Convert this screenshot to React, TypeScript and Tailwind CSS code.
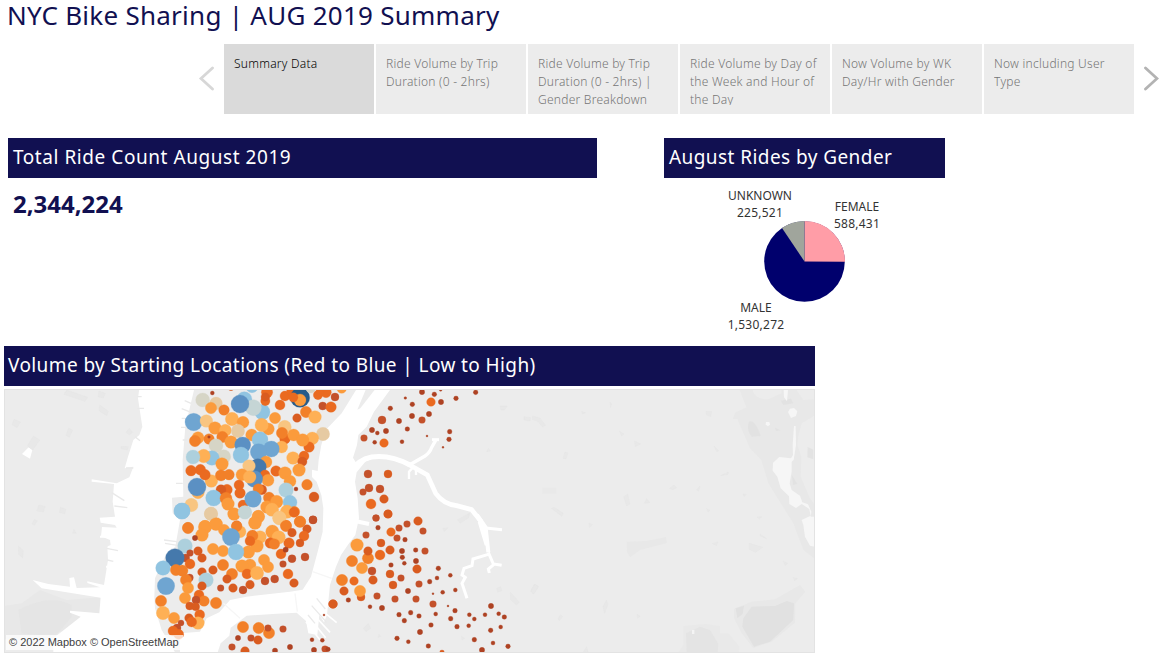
import React from "react";

const COLORS: Record<string, string> = {
  a: "#ae4223",
  b: "#c4512a",
  c: "#d95c20",
  d: "#ea6a20",
  e: "#f28029",
  f: "#fb9b3c",
  g: "#feb055",
  h: "#f8c581",
  t: "#e6caa2",
  s: "#d6d5c6",
  w: "#c5d5d5",
  x: "#add0dd",
  l: "#90c4e1",
  m: "#6fa5d1",
  n: "#5b90c3",
  k: "#4579ac",
  z: "#255a88",
};

type Tile = { x: number; y: number; dots: string };

// Station markers per map tile, in thirds of a pixel: "x y radius colour".
const TILES: Tile[] = [
  {
    x: 150,
    y: 385,
    dots: `306 4 19 l;243 8 9 c;158 45 21 s;187 24 6 a;198 55 19 t;183 69 17 f;222 75 16 e;283 43 23 l;337 81 23 l;310 68 24 w;270 57 27 n;351 22 17 d;346 48 14 d;346 36 13 c;375 99 17 f;390 60 15 d;405 33 15 d;426 18 16 d;450 38 29 z;450 45 18 f;430 37 14 d;482 10 14 s;504 30 14 d;528 22 16 d;510 22 12 d;576 8 14 d;555 36 12 b;518 63 12 b;543 66 16 d;441 99 13 c;468 81 17 e;495 96 19 g;
131 111 26 m;169 108 19 h;246 102 20 g;279 112 18 f;195 129 19 f;226 136 18 g;264 138 20 t;355 132 18 f;335 120 20 g;305 150 18 f;404 126 20 h;405 161 16 d;396 144 17 e;431 150 18 f;519 147 20 t;487 160 19 g;477 186 16 d;458 165 19 f;144 158 18 f;135 168 17 e;177 162 16 e;177 156 4 a;217 156 17 e;198 182 21 s;243 171 19 f;330 164 24 l;278 180 24 n;395 186 18 g;364 192 24 m;326 201 25 m;221 215 21 s;273 210 24 l;186 219 22 l;161 213 20 g;129 216 21 x;216 237 19 f;429 219 19 g;462 213 15 d;457 230 14 c;447 255 19 f;348 231 18 f;324 246 25 k;297 243 19 h;
123 257 16 d;151 254 16 d;184 288 19 g;165 269 16 d;213 271 17 e;237 269 16 e;276 269 18 f;345 270 15 d;354 286 18 f;313 282 25 n;299 276 19 g;378 258 16 d;405 264 19 f;420 289 18 f;471 299 16 e;438 312 6 a;492 336 15 c;144 322 19 g;141 306 27 n;231 314 16 d;213 314 15 c;267 300 15 d;335 314 15 c;325 312 16 e;270 324 16 d;191 339 24 l;228 340 18 e;234 357 19 f;279 360 15 d;309 342 25 m;357 338 17 e;380 350 19 f;408 315 22 x;420 352 21 l;124 360 20 h;96 378 24 l;183 387 20 t;285 382 20 w;252 387 18 f;351 366 19 f;366 374 20 g;433 380 16 e;411 380 20 g;388 400 20 h;325 394 18 f;315 413 19 f;489 405 12 b;450 410 17 e;408 421 16 e;260 422 15 d;114 428 16 e;165 423 17 f;198 417 19 f`,
  },
  {
    x: 140,
    y: 515,
    dots: `126 -12 24 l;213 -4 20 t;282 -3 19 f;314 -8 20 w;355 5 19 f;345 24 19 f;418 8 20 h;462 -8 15 d;480 20 17 e;519 14 12 b;438 33 17 e;456 53 13 c;501 42 13 c;492 63 15 d;480 84 12 c;447 84 16 d;144 39 17 e;195 36 20 f;186 60 19 f;228 27 19 f;252 45 17 f;165 69 8 a;300 50 18 g;290 34 16 e;273 66 26 m;360 66 19 g;337 62 17 e;351 93 19 f;330 78 15 d;397 50 20 f;416 67 20 g;391 84 16 d;403 87 16 e;135 93 22 x;174 108 13 c;150 114 10 b;186 129 13 c;219 102 17 f;249 108 17 f;325 111 19 f;288 111 24 l;423 117 15 d;437 104 8 a;456 131 12 b;495 126 12 b;429 147 10 b;372 135 17 f;384 156 17 f;249 150 17 e;330 150 18 f;306 153 19 f;
137 129 12 b;150 147 15 d;105 129 28 k;69 159 22 l;108 165 17 e;127 167 17 e;78 213 26 m;149 188 11 b;138 195 17 e;144 219 17 f;135 249 17 f;186 171 13 c;219 165 13 c;198 195 22 x;186 213 13 c;242 219 10 b;279 219 13 c;309 225 12 b;330 209 13 c;276 177 17 e;261 192 13 c;321 177 15 d;351 174 20 g;375 198 12 b;404 192 12 b;444 177 15 d;462 204 13 c;63 258 17 e;69 294 20 g;102 309 17 f;177 240 15 d;192 258 16 e;228 264 17 e;168 255 12 b;149 273 12 c;167 275 12 c;179 299 15 d;147 309 13 c;174 324 19 g;155 321 15 d;123 324 9 b;111 339 12 b;116 358 15 d;99 348 15 d;
309 336 17 e;356 339 17 e;387 354 17 e;384 339 10 b;429 342 10 b;294 369 8 a;333 369 10 b;354 375 13 c;276 396 10 b;315 408 13 c;405 407 8 a;450 396 8 a;516 374 6 a;547 376 6 a;522 405 8 a;555 402 10 b;564 403 7 a;552 300 3 a;579 267 13 c`,
  },
  {
    x: 340,
    y: 385,
    dots: `5 11 14 f;246 21 8 a;283 28 7 a;302 15 4 a;407 22 7 a;196 39 4 a;217 58 7 a;273 51 13 d;303 51 8 a;348 40 7 a;151 70 7 a;126 105 12 b;177 108 8 a;216 93 8 a;246 105 10 b;267 87 8 a;202 132 7 a;96 135 8 a;138 138 8 a;112 144 6 a;104 172 6 a;72 159 10 b;132 174 13 d;186 170 6 a;261 153 3 a;309 187 3 a;329 140 7 a;327 163 7 a;84 267 12 b;144 267 12 c;87 309 12 b;69 321 10 b;120 312 12 b;132 342 13 c;93 357 15 d;108 399 10 b;144 387 13 c`,
  },
  {
    x: 330,
    y: 515,
    dots: `138 9 10 b;174 -3 12 c;144 38 7 a;108 60 10 b;183 51 13 d;207 39 10 b;231 27 10 b;264 18 13 c;279 48 10 b;201 69 10 b;225 74 7 a;81 90 19 f;153 84 12 c;114 130 17 e;114 108 13 c;180 105 13 c;150 120 15 d;66 138 17 e;96 159 17 f;216 108 8 a;257 105 7 a;285 108 10 b;217 127 7 a;258 138 8 a;223 145 6 a;183 150 7 a;261 162 13 c;126 168 12 b;180 177 12 c;129 195 13 c;36 195 17 e;72 198 13 d;213 189 10 b;189 210 12 c;42 228 13 c;93 246 12 c;90 228 17 f;55 255 7 a;9 267 13 c;267 207 10 b;299 200 7 a;321 189 6 a;325 160 7 a;361 181 6 a;234 228 8 a;309 236 3 a;338 232 6 a;376 225 6 a;141 243 10 b;195 252 10 b;258 252 10 b;309 267 10 b;354 273 3 a;120 275 6 a;156 279 8 a;375 287 7 a;207 299 7 a;242 293 7 a;267 303 7 a;317 297 6 a;223 317 7 a;303 330 7 a;362 311 7 a;418 299 6 a;433 312 6 a;465 299 6 a;483 273 8 a;506 296 6 a;523 306 7 a;381 335 7 a;416 332 6 a;482 346 7 a;512 336 6 a;270 351 8 a;201 370 7 a;235 380 6 a;295 393 7 a;433 374 7 a;489 384 6 a;534 394 7 a;456 405 8 a;336 412 7 c`,
  },
];

function Basemap() {
  return (
    <>
      <rect x="4" y="389" width="811" height="264" fill="#ececec" />
      {/* Hudson River */}
      <g transform="translate(0 340) scale(.33333)">
        <path
          fill="#e8e8e8"
          d="M0 800 L65 790 L120 750 L200 780 L300 772 L300 830 L170 880 L0 900Z"
        />
        <path
          fill="#e2e2e2"
          d="M55 810 Q150 760 215 795 L215 830 L165 890 L65 880Z"
          opacity=".6"
        />
        <path
          fill="#fff"
          d="M418 146 L414 175 L420 215 L427 260 L418 285 L400 300 L384 350 L374 385 L400 380 L388 412 L350 430 L275 418 L275 425 L342 432 L338 485 L345 530 L299 533 L302 548 L345 555 L350 563 L306 561 L303 589 L330 600 L332 615 L322 620 L324 660 L312 735 L262 724 L262 729 L300 742 L230 744 L222 712 L208 714 L210 740 L145 732 L98 720 L125 745 L302 773 L298 820 L210 812 L210 818 L242 830 L160 895 L160 945 L530 945 L485 870 L465 805 L463 770 L465 715 L500 640 L526 620 L540 540 L518 520 L516 473 L550 470 L548 360 L556 260 L583 146Z"
        />
        <path
          fill="none"
          stroke="#e9e9e9"
          strokeWidth="4"
          d="M412 170 H425 M412 205 H432 M405 290 L420 302 M378 384 H400 M335 458 L373 482 M343 498 L382 503 M320 625 L354 632 M322 660 L340 664 M492 600 L530 605 M495 610 L532 616 M528 430 H548 M545 235 H556 M543 262 H558 M548 300 H560 M554 182 L573 190 M545 206 L568 215"
        />
        <path
          fill="none"
          stroke="#fff"
          strokeWidth="6"
          d="M300 590 H330 M325 620 L345 622 M318 680 H330"
        />
        <path fill="#fff" d="M66 342 L86 322 L97 330 L90 356Z" />
        <g fill="#e8e8e8" stroke="#e4e4e4" strokeWidth="1">
          <path d="M200 150 L263 172 L255 184 L192 163Z M297 153 L316 160 L310 174 L294 170Z M100 288 L119 300 L98 330 L82 318Z M206 264 L218 270 L208 292 L198 286Z M117 495 L135 499 L130 516 L110 513Z M181 502 L198 508 L194 522 L178 517Z M103 538 L112 542 L103 556 L96 552Z M55 618 L70 632 L68 654 L56 643Z M42 238 L62 246 L51 263 L36 254Z M299 195 L325 214 L320 227 L297 212Z M363 319 L385 320 L382 330 L363 326Z M388 265 L398 277 L388 285 L378 277Z M222 568 L229 580 L218 580Z" />
        </g>
      </g>
      {/* East River */}
      <g transform="translate(180 385) scale(.33333)">
        <path
          fill="#fff"
          d="M530 12 L485 85 L437 135 L424 180 L416 225 L413 258 L396 254 L396 276 L410 290 L424 330 L430 370 L428 440 L413 500 L393 575 L368 614 L330 620 L200 635 L150 645 L118 682 L80 700 L60 740 L0 745 L0 805 L112 805 L122 775 L148 752 L152 728 L200 692 L290 686 L350 683 L378 708 L385 745 L412 750 L418 690 L432 712 L441 690 L446 640 L450 600 L468 545 L483 510 L505 478 L526 450 L537 400 L533 340 L525 290 L530 262 L556 230 L595 213 L530 236 L519 218 L531 180 L535 150 L560 125 L582 80 L632 12Z"
        />
        <path fill="#ececec" d="M558 12 L586 12 L541 70 L532 74Z" />
        <path
          fill="none"
          stroke="#fff"
          strokeWidth="5"
          d="M378 710 L420 765 M390 700 L437 758 M402 690 L450 742 M430 680 L470 713"
        />
        <path
          fill="none"
          stroke="#eaeaea"
          strokeWidth="4"
          d="M395 662 L440 712 M410 640 L436 672 M384 690 L405 715"
        />
        <path
          fill="none"
          stroke="#f6f6f6"
          strokeWidth="4"
          d="M398 560 L455 580 M130 655 L180 700 M345 625 L352 680"
        />
      </g>
      {/* Newtown Creek and its branches */}
      <g transform="translate(340 385) scale(.33333)" fill="none" stroke="#fff">
        <path strokeWidth="15" d="M20 270 Q55 222 95 216 Q150 208 210 240" />
        <path strokeWidth="14" d="M205 238 L262 270 L287 325 Q310 357 350 362 L395 374 L424 410" />
        <path strokeWidth="10" d="M208 240 L255 213 Q270 203 275 187 L287 166" />
        <path strokeWidth="9" d="M276 164 H297" />
        <path strokeWidth="7" d="M222 244 L207 260 V282 M228 252 V270" />
      </g>
      <g transform="translate(330 515) scale(.33333)" fill="none" stroke="#fff">
        <path strokeWidth="14" d="M440 0 L467 39" />
        <path strokeWidth="12" d="M449 20 L470 90 M467 39 L475 112" />
        <path strokeWidth="9" d="M467 39 L516 44 M475 112 L490 147 L515 151 M492 148 L475 162 L478 174 M475 118 L429 132 L426 152 L402 160 L396 180 L406 187 L396 205 L411 250" />
        <path strokeWidth="12" d="M75 18 L117 27" />
      </g>
      <g
        transform="translate(330 515) scale(.33333)"
        fill="#e8e8e8"
        stroke="#e4e4e4"
        strokeWidth="1"
      >
        <path d="M383 14 L419 -6 L416 8 L390 25Z M338 40 L354 38 L343 50Z M613 208 L626 214 L610 237 L602 228Z M541 232 L568 261 L559 270 L542 254Z M500 220 L512 215 L516 227 L503 232Z M100 340 L115 325 L122 340 L108 350Z M147 358 L152 364 L144 368Z M395 364 L404 370 L396 375Z M475 -200 L482 -192 L470 -190Z M510 -327 H532 L524 -315 H513Z M582 -295 L602 -292 L600 -282 L582 -285Z" />
      </g>
      {/* Parks and lakes on the eastern side */}
      <g transform="translate(530 340) scale(.33333)">
        <path
          fill="#e8e8e8"
          d="M629 150 L649 202 L615 218 L608 237 L622 237 L660 325 L694 360 L715 430 L790 550 L820 630 L855 657 V495 L840 475 L812 410 L814 350 L802 315 L805 288 L815 250 L855 226 V178 L820 180 L800 150Z"
        />
        <path fill="#ececec" d="M668 150 Q672 177 715 178 L755 160 L755 150Z" />
        <path
          fill="#e0e0e0"
          d="M657 245 Q675 235 692 288 L665 290 Q648 270 657 245Z M752 182 L783 176 L790 190 L760 195Z M833 321 L850 329 V358 L832 352Z M735 263 L752 271 L738 273Z M786 406 L802 432 L789 435Z"
          opacity=".7"
        />
        <path
          fill="#f6f6f6"
          d="M761 150 H774 L771 184 L762 172Z M780 206 L792 204 L802 214 L798 228 L783 234 L774 216Z M708 246 L718 246 L720 254 L714 259 L707 254Z M792 258 H797 L798 315 L791 360 L785 365 L785 395 L779 430 L785 450 L810 467 L817 487 L834 493 L844 515 L842 530 H855 V620 L840 617 L825 590 L820 555 L815 540 L842 527 L838 507 L815 492 L798 504 L778 492 L777 469 L752 445 L742 410 L728 392 L729 368 L748 351 L783 355 L789 345 L788 315Z"
        />
        <path fill="#e8e8e8" d="M290 605 L350 603 L408 591 L411 609 L330 630 L300 652 L291 635Z" />
        <path fill="#e8e8e8" d="M612 806 L665 785 L735 778 L810 735 L826 755 L796 790 L795 848 L725 905 L670 924 L635 880 L612 835Z" />
        <path fill="#e1e1e1" d="M665 800 L735 798 L770 783 L792 790 L790 840 L720 905 L672 920 L637 860 L640 835Z" />
        <path fill="#e1e1e1" d="M617 805 L642 797 L638 822 L622 835Z" />
        <path fill="#e9e9e9" d="M460 858 L525 852 L570 858 L570 880 L595 880 L628 920 L626 938 H445 L460 915Z" />
        <path fill="#e4e4e4" d="M468 880 L510 860 L540 870 L565 912 L563 938 H470Z" />
        <path fill="#f4f4f4" d="M486 870 H493 V882 H486Z" />
        <path
          fill="#e8e8e8"
          stroke="#e5e5e5"
          strokeWidth="1"
          d="M8 228 L30 234 L46 256 L38 262 L25 246 L7 238Z M64 505 L72 502 L100 520 L96 529Z M105 336 L114 339 L108 357 L99 355Z M268 273 L282 282 L275 288Z M313 303 L332 312 L316 320Z M528 215 L545 214 L542 230 L530 225Z M552 318 L566 332 L560 335Z M572 407 L595 396 L594 403Z M418 445 L432 435 L440 443 L428 449Z M499 450 L510 438 L506 454Z M350 476 L360 488 L343 490Z M281 470 L293 462 L300 492 L290 498Z M639 462 L649 463 L642 470Z M177 549 L188 554 L178 562Z M681 531 L696 530 L688 537Z M530 506 L540 512 L534 516Z M547 611 L564 605 L560 617Z M658 610 L698 622 L676 637 L658 628Z M690 582 L710 596 L691 588Z M759 663 L773 670 L766 677Z M789 712 L802 716 L794 722Z M14 733 L25 740 L12 762 L2 754Z M229 780 L234 792 L224 821 L219 800Z M91 824 L98 829 L88 842 L84 837Z M155 214 L167 219 L156 222Z M160 935 L170 920 L174 937Z M321 823 L331 829 L322 835Z M240 186 L245 192 L242 203Z"
        />
        <rect x="37" y="443" width="42" height="18" fill="#e9e9e9" />
      </g>
    </>
  );
}

function StationMap() {
  return (
    <svg className="block h-[264px] w-[811px]" viewBox="4 389 811 264" role="img">
      <Basemap />
      {TILES.map((tile) => (
        <g
          key={`${tile.x}-${tile.y}`}
          transform={`translate(${tile.x} ${tile.y}) scale(.33333)`}
        >
          {tile.dots.split(";").map((entry, i) => {
            const [x, y, r, c] = entry.trim().split(" ");
            return (
              <circle
                key={i}
                cx={x}
                cy={y}
                r={r}
                fill={COLORS[c]}
                stroke={COLORS[c]}
                strokeWidth="3"
                strokeOpacity=".3"
              />
            );
          })}
        </g>
      ))}
      <rect x="4.5" y="389.5" width="810" height="263" fill="none" stroke="#e3e3e3" />
    </svg>
  );
}

const TABS = [
  "Summary Data",
  "Ride Volume by Trip Duration (0 - 2hrs)",
  "Ride Volume by Trip Duration (0 - 2hrs) | Gender Breakdown",
  "Ride Volume by Day of the Week and Hour of the Day",
  "Now Volume by WK Day/Hr with Gender",
  "Now including User Type",
];

function Arrow({ d, color }: { d: string; color: string }) {
  return (
    <svg className="h-[26px] w-4" viewBox="0 0 16 26">
      <path d={d} fill="none" stroke={color} strokeWidth="2.8" strokeLinecap="round" />
    </svg>
  );
}

function Heading({ children, className }: { children: string; className: string }) {
  return (
    <h2
      className={`h-10 bg-[#111051] text-[19px] leading-[38px] whitespace-nowrap text-white ${className}`}
    >
      {children}
    </h2>
  );
}

function PieLabel({ name, value, className }: { name: string; value: string; className: string }) {
  return (
    <div className={`absolute text-center text-[12px] leading-[17px] text-[#333] ${className}`}>
      {name}
      <br />
      <span className="tracking-[0.25px]">{value}</span>
    </div>
  );
}

export default function App() {
  return (
    <main className="flex h-[663px] w-[1174px] flex-col overflow-hidden bg-white font-['Noto_Sans',sans-serif]">
      <h1 className="h-11 pl-[7px] text-[26px] leading-[31px] tracking-[0.26px] whitespace-nowrap text-[#111051]">
        NYC Bike Sharing | AUG 2019 Summary
      </h1>

      <nav className="flex h-[70px] items-center pl-[198px]">
        <div className="w-[26px] pb-0.5">
          <Arrow d="M14.5 3 L3 13.5 L14.5 24" color="#d7d7d7" />
        </div>
        <div className="flex gap-0.5">
          {TABS.map((tab, i) => (
            <div
              key={tab}
              className={`h-[70px] w-[150px] pt-[11px] pl-[10px] text-[12px] font-light tracking-[0.25px] ${
                i === 0 ? "bg-[#dadada] text-black" : "bg-[#ececec] text-[#757575]"
              }`}
            >
              <div className="h-[50px] w-[132px] overflow-hidden leading-[18px]">{tab}</div>
            </div>
          ))}
        </div>
        <div className="pb-0.5 pl-[9px]">
          <Arrow d="M2.5 3 L14 13.5 L2.5 24" color="#b3b3b3" />
        </div>
      </nav>

      <div className="flex h-[232px] pt-6 pl-2">
        <section className="w-[589px]">
          <Heading className="pl-[5px] tracking-[0.56px]">Total Ride Count August 2019</Heading>
          <p className="pt-[11px] pl-[5px] text-[24px] leading-[30px] font-bold text-[#111051]">
            2,344,224
          </p>
        </section>
        <section className="ml-[67px] w-[281px]">
          <Heading className="pl-[5px] tracking-[0.43px]">August Rides by Gender</Heading>
          <div className="relative h-[160px]">
            <svg className="h-[160px] w-[281px]" viewBox="664 178 281 160">
              <circle cx="804.5" cy="261.5" r="40.3" fill="#00006d" />
              <path d="M804.5 261.5 V221 A40.5 40.5 0 0 1 845 261.8Z" fill="#ff9da7" />
              <path d="M804.5 261.5 L782 228 A40.5 40.5 0 0 1 804.5 221Z" fill="#a0a59c" />
            </svg>
            <PieLabel name="UNKNOWN" value="225,521" className="top-[9px] left-[56px] w-20" />
            <PieLabel name="FEMALE" value="588,431" className="top-[20px] left-[153px] w-20" />
            <PieLabel name="MALE" value="1,530,272" className="top-[121px] left-[52px] w-20" />
          </div>
        </section>
      </div>

      <section className="ml-1 w-[811px]">
        <Heading className="pl-[4px] tracking-[0.4px]">
          Volume by Starting Locations (Red to Blue | Low to High)
        </Heading>
        <div className="relative pt-[3px]">
          <StationMap />
          <div className="absolute bottom-[3px] left-0.5 h-[15px] w-[177px] bg-white/75 pl-[3px] font-['Liberation_Sans',sans-serif] text-[11px] leading-[15px] whitespace-nowrap text-[#404040]">
            © 2022 Mapbox © OpenStreetMap
          </div>
        </div>
      </section>
    </main>
  );
}
